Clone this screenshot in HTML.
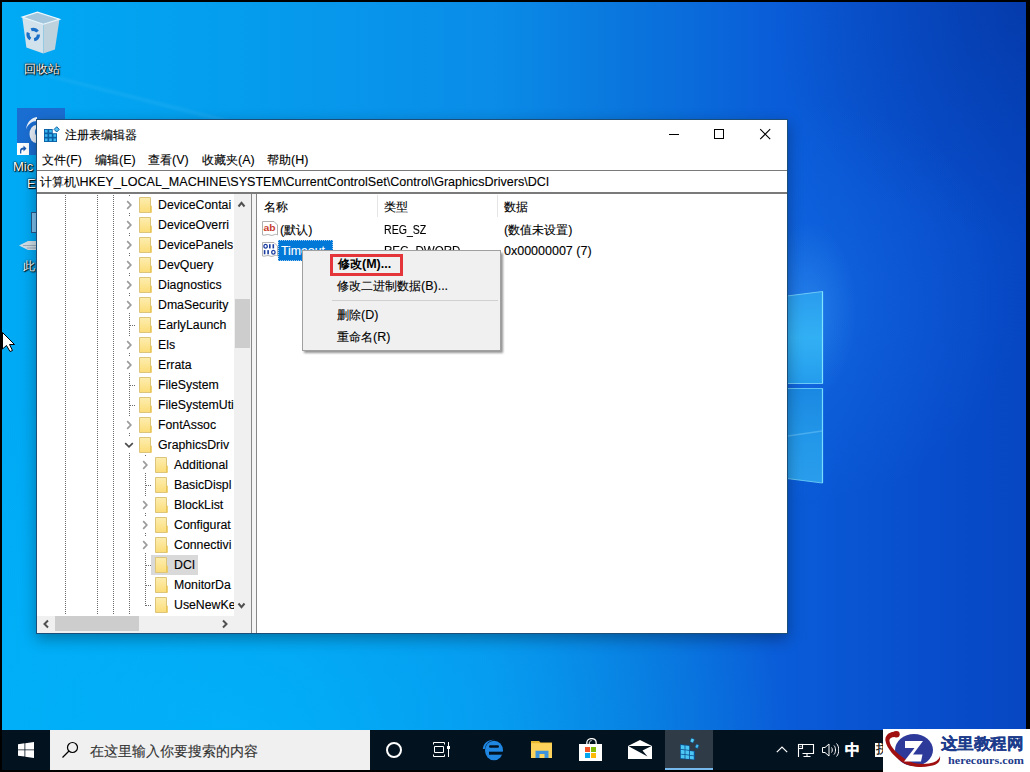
<!DOCTYPE html>
<html><head><meta charset="utf-8">
<style>
html,body{margin:0;padding:0;width:1030px;height:772px;overflow:hidden;background:#000;font-family:"Liberation Sans",sans-serif;}
.a{position:absolute;}
.t{position:absolute;white-space:nowrap;line-height:20px;height:20px;font-size:12.5px;color:#000;-webkit-text-stroke:0.12px currentColor;}
.tr{font-size:12.3px;}
.cj{font-size:12px;}
.dotv{width:1px;background:repeating-linear-gradient(180deg,#6a6a6a 0,#6a6a6a 1px,transparent 1px,transparent 2px);}
.doth{height:1px;background:repeating-linear-gradient(90deg,#6a6a6a 0,#6a6a6a 1px,transparent 1px,transparent 2px);}
#desk{position:absolute;left:2px;top:2px;width:1024px;height:728px;overflow:hidden;
 background:
  radial-gradient(ellipse 50px 90px at 805px 310px, rgba(80,190,255,0.3), rgba(80,190,255,0) 100%),
  radial-gradient(ellipse 220px 200px at 800px 300px, rgba(30,120,240,0.35), rgba(30,120,240,0) 100%),
  radial-gradient(ellipse 260px 240px at 1024px 0px, rgba(0,20,90,0.22), rgba(0,20,90,0) 100%),
  radial-gradient(ellipse 560px 380px at 230px 740px, rgba(0,182,252,0.75), rgba(0,182,252,0) 100%),
  linear-gradient(90deg,#00aaf4 0%,#069aec 28%,#0a8ce8 48%,#0a74dc 62%,#0a5cd8 76%,#084ecc 90%,#0646c2 100%);}
.dl{position:absolute;white-space:nowrap;font-size:12px;color:#fff;text-shadow:0 0 2px #000,1px 1px 1px #000;line-height:14px;}
</style></head><body>
<div id="desk">
  <svg class="a" style="left:0;top:0" width="1024" height="728">
    <path d="M24 68L300 138" stroke="rgba(160,225,255,0.11)" stroke-width="3" filter="blur(1.5px)"/>
    <defs>
      <linearGradient id="pane1" x1="0" y1="0" x2="0" y2="1"><stop offset="0" stop-color="#2a9cee"/><stop offset="0.5" stop-color="#32b0f4"/><stop offset="1" stop-color="#249cec"/></linearGradient>
      <linearGradient id="pane2" x1="0" y1="0" x2="0" y2="1"><stop offset="0" stop-color="#1a88e2"/><stop offset="0.5" stop-color="#2296e8"/><stop offset="1" stop-color="#2a9eec"/></linearGradient>
    </defs>
    <path d="M785 294L820.5 289.5V381.5H785Z" fill="url(#pane1)" stroke="#6ccaf8" stroke-width="1"/><path d="M820.5 289.5V381.5" stroke="#80e4ff" stroke-width="1.2"/>
    <path d="M785 386.5H820.5V481L785 476.5Z" fill="url(#pane2)" stroke="#60c4f4" stroke-width="1"/><path d="M820.5 386.5V481" stroke="#78dcff" stroke-width="1.2"/><path d="M786 434L820 429" stroke="rgba(150,220,255,0.35)" stroke-width="1.5"/>
  </svg>
</div>

<!-- desktop icons -->
<svg class="a" style="left:18px;top:8px" width="46" height="50" viewBox="0 0 46 50">
  <path d="M4.2 9.1L25.3 16.2V45.4L8.4 39.5Z" fill="#d2e2ec"/>
  <path d="M25.3 16.2L41.5 11.3L36.9 41.5L25.3 45.4Z" fill="#bed2de"/>
  <path d="M4.2 9.1L19.4 4.2L41.5 11.3L25.3 16.2Z" fill="#a4c6dc" stroke="#eef8fd" stroke-width="1.2"/>
  <circle cx="15.2" cy="26.6" r="5.2" fill="none" stroke="#1a6fc8" stroke-width="3.2" stroke-dasharray="7 3.9"/>
</svg>
<div class="dl" style="left:24px;top:62px;font-size:12px;text-shadow:0 0 2px #000,1px 1px 1px #000,0 0 1px #000">回收站</div>
<div class="a" style="left:17px;top:108px;width:48px;height:47px;background:#1a6ed2"></div>
<svg class="a" style="left:18px;top:112px" width="20" height="34" viewBox="0 0 20 34"><path d="M8 17.5C9 10 13 6 19 5V9C14 9 10 12 8 17.5Z" fill="#fff" opacity="0.92"/><ellipse cx="18" cy="22" rx="6.5" ry="9" fill="#fff" opacity="0.92"/><ellipse cx="20" cy="20" rx="3" ry="4" fill="#1a6ed2"/></svg>
<div class="a" style="left:17px;top:143px;width:12px;height:12px;background:#fff"></div>
<svg class="a" style="left:17px;top:143px" width="12" height="12" viewBox="0 0 12 12"><path d="M3 10.5V7.5C3 5.5 4.5 4.5 6.5 4.5V2.5L9.5 5.5L6.5 8.5V6.5C5 6.5 4.3 7.3 4.3 8.5V10.5Z" fill="#1c5ab0"/></svg>
<div class="dl" style="left:13px;top:160px;font-size:13px;text-shadow:0 0 2px #000,1px 1px 1px #000,0 0 1px #000">Mic</div>
<div class="dl" style="left:27px;top:177px;font-size:13px;text-shadow:0 0 2px #000,1px 1px 1px #000,0 0 1px #000">Ed</div>
<div class="a" style="left:31px;top:212px;width:6px;height:19px;background:#7cc0ec;border:1px solid #2a5a8a"></div>
<svg class="a" style="left:19px;top:241px" width="18" height="9"><path d="M0 4.5L9 0H18V9H9Z" fill="#d0dde6"/><path d="M4 4.5H18M8 7H18" stroke="#8aa0b0" stroke-width="0.8"/></svg>
<div class="dl" style="left:23px;top:259px">此电</div>
<!-- cursor -->
<svg class="a" style="left:2px;top:332px" width="14" height="21" viewBox="0 0 14 21"><path d="M0.5 0.5V17L4.5 13.5L8 19.5L10.5 18.5L7.5 12.5H12.5Z" fill="#fff" stroke="#000" stroke-width="1"/></svg>

<!-- window -->
<div class="a" style="left:36px;top:119px;width:752px;height:515px;box-shadow:0 5px 14px rgba(0,0,0,0.32)"></div>
<div class="a" style="left:36px;top:119px;width:752px;height:515px;background:#1b4e78"></div>
<div class="a" style="left:37px;top:120px;width:750px;height:513px;background:#fff"></div>
<!-- title -->
<svg class="a" style="left:44px;top:126px" width="16" height="17" viewBox="0 0 16 17">
  <path d="M0 3H8.7V7.3H13V16H0Z" fill="#0b5fa5"/>
  <g fill="#3ab8f0">
    <rect x="0.9" y="3.9" width="2.6" height="2.6"/><rect x="5.2" y="3.9" width="2.6" height="2.6"/>
    <rect x="0.9" y="8.2" width="2.6" height="2.6"/><rect x="5.2" y="8.2" width="2.6" height="2.6"/><rect x="9.5" y="8.2" width="2.6" height="2.6"/>
    <rect x="0.9" y="12.5" width="2.6" height="2.6"/><rect x="5.2" y="12.5" width="2.6" height="2.6"/><rect x="9.5" y="12.5" width="2.6" height="2.6"/>
  </g>
  <path d="M12.7 0.8L15.3 3.4L12.7 6L10.1 3.4Z" fill="#58c4f2" stroke="#0b5fa5" stroke-width="1"/>
</svg>
<div class="t cj" style="left:65px;top:125px">注册表编辑器</div>
<svg class="a" style="left:660px;top:120px" width="127" height="30">
  <path d="M9 14.5H19" stroke="#000" stroke-width="1"/>
  <rect x="54.5" y="9.5" width="9" height="9" fill="none" stroke="#000" stroke-width="1"/>
  <path d="M100.2 9.2L110.2 19.2M110.2 9.2L100.2 19.2" stroke="#000" stroke-width="1.1"/>
</svg>
<!-- menu -->
<div class="t" style="left:42px;top:150px"><span class="cj">文件</span>(F)</div>
<div class="t" style="left:95px;top:150px"><span class="cj">编辑</span>(E)</div>
<div class="t" style="left:148px;top:150px"><span class="cj">查看</span>(V)</div>
<div class="t" style="left:202px;top:150px"><span class="cj">收藏夹</span>(A)</div>
<div class="t" style="left:267px;top:150px"><span class="cj">帮助</span>(H)</div>
<!-- address -->
<div class="a" style="left:37px;top:170px;width:750px;height:1px;background:#7a7a7a"></div>
<div class="a" style="left:37px;top:192px;width:750px;height:2px;background:#7a7a7a"></div>
<div class="t" style="left:40px;top:172px;font-size:12.57px"><span class="cj">计算机</span>\HKEY_LOCAL_MACHINE\SYSTEM\CurrentControlSet\Control\GraphicsDrivers\DCI</div>

<svg width="0" height="0" style="position:absolute"><defs><linearGradient id="fg" x1="0" y1="0" x2="0" y2="1"><stop offset="0" stop-color="#fdeeb0"/><stop offset="1" stop-color="#fbdc78"/></linearGradient></defs></svg>
<div class="a dotv" style="left:65px;top:195px;height:420px"></div>
<div class="a dotv" style="left:97px;top:195px;height:420px"></div>
<div class="a dotv" style="left:113px;top:195px;height:420px"></div>
<div class="a dotv" style="left:129px;top:195px;height:420px"></div>
<div class="a dotv" style="left:145px;top:455px;height:151px"></div>
<div class="a" style="left:124px;top:197px;width:10px;height:16px;background:#fff"></div>
<svg class="a" style="left:125px;top:199px" width="8" height="12" viewBox="0 0 8 12"><path d="M2.2 2.2L5.8 6L2.2 9.8" fill="none" stroke="#9a9a9a" stroke-width="1.7"/></svg>
<svg class="a" style="left:139px;top:197px" width="14" height="17" viewBox="0 0 14 17"><defs></defs><path d="M0.5 0.5H11.5V15.5H0.5Z" fill="url(#fg)" stroke="#dcc47a"/><path d="M11 9.5L12.8 8.5V15.8H11Z" fill="#e9c65a"/></svg>
<div class="t tr" style="left:158px;top:195px">DeviceContai</div>
<div class="a" style="left:124px;top:217px;width:10px;height:16px;background:#fff"></div>
<svg class="a" style="left:125px;top:219px" width="8" height="12" viewBox="0 0 8 12"><path d="M2.2 2.2L5.8 6L2.2 9.8" fill="none" stroke="#9a9a9a" stroke-width="1.7"/></svg>
<svg class="a" style="left:139px;top:217px" width="14" height="17" viewBox="0 0 14 17"><defs></defs><path d="M0.5 0.5H11.5V15.5H0.5Z" fill="url(#fg)" stroke="#dcc47a"/><path d="M11 9.5L12.8 8.5V15.8H11Z" fill="#e9c65a"/></svg>
<div class="t tr" style="left:158px;top:215px">DeviceOverri</div>
<div class="a" style="left:124px;top:237px;width:10px;height:16px;background:#fff"></div>
<svg class="a" style="left:125px;top:239px" width="8" height="12" viewBox="0 0 8 12"><path d="M2.2 2.2L5.8 6L2.2 9.8" fill="none" stroke="#9a9a9a" stroke-width="1.7"/></svg>
<svg class="a" style="left:139px;top:237px" width="14" height="17" viewBox="0 0 14 17"><defs></defs><path d="M0.5 0.5H11.5V15.5H0.5Z" fill="url(#fg)" stroke="#dcc47a"/><path d="M11 9.5L12.8 8.5V15.8H11Z" fill="#e9c65a"/></svg>
<div class="t tr" style="left:158px;top:235px">DevicePanels</div>
<div class="a" style="left:124px;top:257px;width:10px;height:16px;background:#fff"></div>
<svg class="a" style="left:125px;top:259px" width="8" height="12" viewBox="0 0 8 12"><path d="M2.2 2.2L5.8 6L2.2 9.8" fill="none" stroke="#9a9a9a" stroke-width="1.7"/></svg>
<svg class="a" style="left:139px;top:257px" width="14" height="17" viewBox="0 0 14 17"><defs></defs><path d="M0.5 0.5H11.5V15.5H0.5Z" fill="url(#fg)" stroke="#dcc47a"/><path d="M11 9.5L12.8 8.5V15.8H11Z" fill="#e9c65a"/></svg>
<div class="t tr" style="left:158px;top:255px">DevQuery</div>
<div class="a" style="left:124px;top:277px;width:10px;height:16px;background:#fff"></div>
<svg class="a" style="left:125px;top:279px" width="8" height="12" viewBox="0 0 8 12"><path d="M2.2 2.2L5.8 6L2.2 9.8" fill="none" stroke="#9a9a9a" stroke-width="1.7"/></svg>
<svg class="a" style="left:139px;top:277px" width="14" height="17" viewBox="0 0 14 17"><defs></defs><path d="M0.5 0.5H11.5V15.5H0.5Z" fill="url(#fg)" stroke="#dcc47a"/><path d="M11 9.5L12.8 8.5V15.8H11Z" fill="#e9c65a"/></svg>
<div class="t tr" style="left:158px;top:275px">Diagnostics</div>
<div class="a" style="left:124px;top:297px;width:10px;height:16px;background:#fff"></div>
<svg class="a" style="left:125px;top:299px" width="8" height="12" viewBox="0 0 8 12"><path d="M2.2 2.2L5.8 6L2.2 9.8" fill="none" stroke="#9a9a9a" stroke-width="1.7"/></svg>
<svg class="a" style="left:139px;top:297px" width="14" height="17" viewBox="0 0 14 17"><defs></defs><path d="M0.5 0.5H11.5V15.5H0.5Z" fill="url(#fg)" stroke="#dcc47a"/><path d="M11 9.5L12.8 8.5V15.8H11Z" fill="#e9c65a"/></svg>
<div class="t tr" style="left:158px;top:295px">DmaSecurity</div>
<div class="a doth" style="left:130px;top:325px;width:6px"></div>
<svg class="a" style="left:139px;top:317px" width="14" height="17" viewBox="0 0 14 17"><defs></defs><path d="M0.5 0.5H11.5V15.5H0.5Z" fill="url(#fg)" stroke="#dcc47a"/><path d="M11 9.5L12.8 8.5V15.8H11Z" fill="#e9c65a"/></svg>
<div class="t tr" style="left:158px;top:315px">EarlyLaunch</div>
<div class="a" style="left:124px;top:337px;width:10px;height:16px;background:#fff"></div>
<svg class="a" style="left:125px;top:339px" width="8" height="12" viewBox="0 0 8 12"><path d="M2.2 2.2L5.8 6L2.2 9.8" fill="none" stroke="#9a9a9a" stroke-width="1.7"/></svg>
<svg class="a" style="left:139px;top:337px" width="14" height="17" viewBox="0 0 14 17"><defs></defs><path d="M0.5 0.5H11.5V15.5H0.5Z" fill="url(#fg)" stroke="#dcc47a"/><path d="M11 9.5L12.8 8.5V15.8H11Z" fill="#e9c65a"/></svg>
<div class="t tr" style="left:158px;top:335px">Els</div>
<div class="a" style="left:124px;top:357px;width:10px;height:16px;background:#fff"></div>
<svg class="a" style="left:125px;top:359px" width="8" height="12" viewBox="0 0 8 12"><path d="M2.2 2.2L5.8 6L2.2 9.8" fill="none" stroke="#9a9a9a" stroke-width="1.7"/></svg>
<svg class="a" style="left:139px;top:357px" width="14" height="17" viewBox="0 0 14 17"><defs></defs><path d="M0.5 0.5H11.5V15.5H0.5Z" fill="url(#fg)" stroke="#dcc47a"/><path d="M11 9.5L12.8 8.5V15.8H11Z" fill="#e9c65a"/></svg>
<div class="t tr" style="left:158px;top:355px">Errata</div>
<div class="a doth" style="left:130px;top:385px;width:6px"></div>
<svg class="a" style="left:139px;top:377px" width="14" height="17" viewBox="0 0 14 17"><defs></defs><path d="M0.5 0.5H11.5V15.5H0.5Z" fill="url(#fg)" stroke="#dcc47a"/><path d="M11 9.5L12.8 8.5V15.8H11Z" fill="#e9c65a"/></svg>
<div class="t tr" style="left:158px;top:375px">FileSystem</div>
<div class="a doth" style="left:130px;top:405px;width:6px"></div>
<svg class="a" style="left:139px;top:397px" width="14" height="17" viewBox="0 0 14 17"><defs></defs><path d="M0.5 0.5H11.5V15.5H0.5Z" fill="url(#fg)" stroke="#dcc47a"/><path d="M11 9.5L12.8 8.5V15.8H11Z" fill="#e9c65a"/></svg>
<div class="t tr" style="left:158px;top:395px">FileSystemUti</div>
<div class="a" style="left:124px;top:417px;width:10px;height:16px;background:#fff"></div>
<svg class="a" style="left:125px;top:419px" width="8" height="12" viewBox="0 0 8 12"><path d="M2.2 2.2L5.8 6L2.2 9.8" fill="none" stroke="#9a9a9a" stroke-width="1.7"/></svg>
<svg class="a" style="left:139px;top:417px" width="14" height="17" viewBox="0 0 14 17"><defs></defs><path d="M0.5 0.5H11.5V15.5H0.5Z" fill="url(#fg)" stroke="#dcc47a"/><path d="M11 9.5L12.8 8.5V15.8H11Z" fill="#e9c65a"/></svg>
<div class="t tr" style="left:158px;top:415px">FontAssoc</div>
<div class="a" style="left:123px;top:437px;width:12px;height:16px;background:#fff"></div>
<svg class="a" style="left:123px;top:441px" width="12" height="8" viewBox="0 0 12 8"><path d="M2.2 2.2L6 5.8L9.8 2.2" fill="none" stroke="#4a4a4a" stroke-width="1.7"/></svg>
<svg class="a" style="left:139px;top:437px" width="14" height="17" viewBox="0 0 14 17"><defs></defs><path d="M0.5 0.5H11.5V15.5H0.5Z" fill="url(#fg)" stroke="#dcc47a"/><path d="M11 9.5L12.8 8.5V15.8H11Z" fill="#e9c65a"/></svg>
<div class="t tr" style="left:158px;top:435px">GraphicsDriv</div>
<div class="a" style="left:140px;top:457px;width:10px;height:16px;background:#fff"></div>
<svg class="a" style="left:141px;top:459px" width="8" height="12" viewBox="0 0 8 12"><path d="M2.2 2.2L5.8 6L2.2 9.8" fill="none" stroke="#9a9a9a" stroke-width="1.7"/></svg>
<svg class="a" style="left:155px;top:457px" width="14" height="17" viewBox="0 0 14 17"><defs></defs><path d="M0.5 0.5H11.5V15.5H0.5Z" fill="url(#fg)" stroke="#dcc47a"/><path d="M11 9.5L12.8 8.5V15.8H11Z" fill="#e9c65a"/></svg>
<div class="t tr" style="left:174px;top:455px">Additional</div>
<div class="a doth" style="left:146px;top:485px;width:6px"></div>
<svg class="a" style="left:155px;top:477px" width="14" height="17" viewBox="0 0 14 17"><defs></defs><path d="M0.5 0.5H11.5V15.5H0.5Z" fill="url(#fg)" stroke="#dcc47a"/><path d="M11 9.5L12.8 8.5V15.8H11Z" fill="#e9c65a"/></svg>
<div class="t tr" style="left:174px;top:475px">BasicDispl</div>
<div class="a" style="left:140px;top:497px;width:10px;height:16px;background:#fff"></div>
<svg class="a" style="left:141px;top:499px" width="8" height="12" viewBox="0 0 8 12"><path d="M2.2 2.2L5.8 6L2.2 9.8" fill="none" stroke="#9a9a9a" stroke-width="1.7"/></svg>
<svg class="a" style="left:155px;top:497px" width="14" height="17" viewBox="0 0 14 17"><defs></defs><path d="M0.5 0.5H11.5V15.5H0.5Z" fill="url(#fg)" stroke="#dcc47a"/><path d="M11 9.5L12.8 8.5V15.8H11Z" fill="#e9c65a"/></svg>
<div class="t tr" style="left:174px;top:495px">BlockList</div>
<div class="a" style="left:140px;top:517px;width:10px;height:16px;background:#fff"></div>
<svg class="a" style="left:141px;top:519px" width="8" height="12" viewBox="0 0 8 12"><path d="M2.2 2.2L5.8 6L2.2 9.8" fill="none" stroke="#9a9a9a" stroke-width="1.7"/></svg>
<svg class="a" style="left:155px;top:517px" width="14" height="17" viewBox="0 0 14 17"><defs></defs><path d="M0.5 0.5H11.5V15.5H0.5Z" fill="url(#fg)" stroke="#dcc47a"/><path d="M11 9.5L12.8 8.5V15.8H11Z" fill="#e9c65a"/></svg>
<div class="t tr" style="left:174px;top:515px">Configurat</div>
<div class="a" style="left:140px;top:537px;width:10px;height:16px;background:#fff"></div>
<svg class="a" style="left:141px;top:539px" width="8" height="12" viewBox="0 0 8 12"><path d="M2.2 2.2L5.8 6L2.2 9.8" fill="none" stroke="#9a9a9a" stroke-width="1.7"/></svg>
<svg class="a" style="left:155px;top:537px" width="14" height="17" viewBox="0 0 14 17"><defs></defs><path d="M0.5 0.5H11.5V15.5H0.5Z" fill="url(#fg)" stroke="#dcc47a"/><path d="M11 9.5L12.8 8.5V15.8H11Z" fill="#e9c65a"/></svg>
<div class="t tr" style="left:174px;top:535px">Connectivi</div>
<div class="a doth" style="left:146px;top:565px;width:6px"></div>
<div class="a" style="left:151px;top:555px;width:47px;height:20px;background:#d9d9d9"></div>
<svg class="a" style="left:155px;top:557px" width="14" height="17" viewBox="0 0 14 17"><defs></defs><path d="M0.5 0.5H11.5V15.5H0.5Z" fill="url(#fg)" stroke="#dcc47a"/><path d="M11 9.5L12.8 8.5V15.8H11Z" fill="#e9c65a"/></svg>
<div class="t tr" style="left:174px;top:555px">DCI</div>
<div class="a doth" style="left:146px;top:585px;width:6px"></div>
<svg class="a" style="left:155px;top:577px" width="14" height="17" viewBox="0 0 14 17"><defs></defs><path d="M0.5 0.5H11.5V15.5H0.5Z" fill="url(#fg)" stroke="#dcc47a"/><path d="M11 9.5L12.8 8.5V15.8H11Z" fill="#e9c65a"/></svg>
<div class="t tr" style="left:174px;top:575px">MonitorDa</div>
<div class="a doth" style="left:146px;top:605px;width:6px"></div>
<svg class="a" style="left:155px;top:597px" width="14" height="17" viewBox="0 0 14 17"><defs></defs><path d="M0.5 0.5H11.5V15.5H0.5Z" fill="url(#fg)" stroke="#dcc47a"/><path d="M11 9.5L12.8 8.5V15.8H11Z" fill="#e9c65a"/></svg>
<div class="t tr" style="left:174px;top:595px">UseNewKe</div>
<!-- tree scrollbars -->
<div class="a" style="left:234px;top:194px;width:17px;height:422px;background:#f0f0f0"></div>
<div class="a" style="left:235px;top:299px;width:15px;height:49px;background:#cdcdcd"></div>
<svg class="a" style="left:234px;top:196px" width="17" height="16"><path d="M4.5 10.5L7.5 6.8L10.5 10.5" fill="none" stroke="#505050" stroke-width="2"/></svg>
<svg class="a" style="left:234px;top:598px" width="17" height="16"><path d="M4.5 5.5L7.5 9.2L10.5 5.5" fill="none" stroke="#505050" stroke-width="2"/></svg>
<div class="a" style="left:37px;top:616px;width:214px;height:17px;background:#f0f0f0"></div>
<div class="a" style="left:55px;top:616px;width:84px;height:15px;background:#cdcdcd"></div>
<svg class="a" style="left:38px;top:616px" width="17" height="16"><path d="M10 4.5L6.5 8L10 11.5" fill="none" stroke="#505050" stroke-width="2"/></svg>
<svg class="a" style="left:216px;top:616px" width="17" height="16"><path d="M7 4.5L10.5 8L7 11.5" fill="none" stroke="#505050" stroke-width="2"/></svg>
<div class="a" style="left:251px;top:194px;width:1px;height:439px;background:#888"></div>
<div class="a" style="left:252px;top:194px;width:4px;height:439px;background:#f4f4f4"></div>
<div class="a" style="left:256px;top:194px;width:1px;height:439px;background:#888"></div>

<!-- list -->
<div class="t cj" style="left:264px;top:197px">名称</div>
<div class="t cj" style="left:384px;top:197px">类型</div>
<div class="t cj" style="left:504px;top:197px">数据</div>
<div class="a" style="left:377px;top:195px;width:1px;height:22px;background:#e5e5e5"></div>
<div class="a" style="left:497px;top:195px;width:1px;height:22px;background:#e5e5e5"></div>

<svg class="a" style="left:262px;top:221px" width="17" height="16" viewBox="0 0 17 16">
  <path d="M0.5 0.5H12L15.5 4V14C13 12 11 15.5 8 14C5 12.5 3 15 0.5 14Z" fill="#fff" stroke="#b0b0b0"/>
  <text x="1.5" y="9.8" font-family="Liberation Sans" font-weight="bold" font-size="9" fill="#c83a2c" textLength="12" lengthAdjust="spacingAndGlyphs">ab</text>
</svg>
<div class="t" style="left:280px;top:220px">(<span class="cj">默认</span>)</div>
<div class="t tr" style="left:384px;top:220px;transform:scaleX(0.86);transform-origin:0 0">REG_SZ</div>
<div class="t" style="left:504px;top:220px">(<span class="cj">数值未设置</span>)</div>

<svg class="a" style="left:262px;top:242px" width="17" height="16" viewBox="0 0 17 16">
  <path d="M0.5 0.5H12L15.5 4V14C13 12 11 15.5 8 14C5 12.5 3 15 0.5 14Z" fill="#fff" stroke="#b0b0b0"/>
  <g fill="none" stroke="#1a3ca0" stroke-width="1.3"><ellipse cx="3.6" cy="4.3" rx="1.7" ry="1.9"/><ellipse cx="11.4" cy="10.2" rx="1.7" ry="1.9"/></g>
  <g fill="#1a3ca0"><rect x="7" y="2.2" width="1.6" height="4.2"/><rect x="10.5" y="2.2" width="1.6" height="4.2"/><rect x="1.8" y="8.1" width="1.6" height="4.2"/><rect x="5.3" y="8.1" width="1.6" height="4.2"/></g>
</svg>
<div class="a" style="left:278px;top:240px;width:55px;height:21px;background:#0078d7"></div>
<div class="a" style="left:278px;top:240px;width:53px;height:19px;border:1px dotted #9cc8f0"></div>
<div class="t tr" style="left:281px;top:241px;color:#fff">Timeout</div>
<div class="t tr" style="left:384px;top:241px;transform:scaleX(0.94);transform-origin:0 0">REG_DWORD</div>
<div class="t" style="left:504px;top:241px">0x00000007 (7)</div>

<!-- context menu -->
<div class="a" style="left:304px;top:253px;width:199px;height:100px;background:rgba(0,0,0,0.42);filter:blur(1px)"></div>
<div class="a" style="left:302px;top:250px;width:197px;height:99px;background:#f0f0f0;border:1px solid #a0a0a0"></div>
<div class="t" style="left:338px;top:254px;font-weight:bold;-webkit-text-stroke:0"><span class="cj">修改</span>(M)...</div>
<div class="a" style="left:330px;top:254px;width:67px;height:16px;border:3px solid #e4363a"></div>
<div class="t" style="left:337px;top:276px"><span class="cj">修改二进制数据</span>(B)...</div>
<div class="a" style="left:332px;top:300px;width:166px;height:1px;background:#d0d0d0"></div>
<div class="t" style="left:337px;top:305px"><span class="cj">删除</span>(D)</div>
<div class="t" style="left:337px;top:327px"><span class="cj">重命名</span>(R)</div>

<!-- taskbar -->
<div class="a" style="left:2px;top:730px;width:1024px;height:40px;background:#03121f"></div>
<svg class="a" style="left:18px;top:742px" width="16" height="16" viewBox="0 0 16 16"><path d="M0 2.2L6.5 1.3V7.5H0ZM7.3 1.2L16 0V7.5H7.3ZM0 8.3H6.5V14.6L0 13.7ZM7.3 8.3H16V16L7.3 14.8Z" fill="#fff"/></svg>
<div class="a" style="left:50px;top:730px;width:320px;height:40px;background:#f0f0f0"></div>
<svg class="a" style="left:60px;top:740px" width="20" height="20"><circle cx="12.5" cy="7.5" r="5" fill="none" stroke="#000" stroke-width="1.2"/><path d="M9 11L2.5 17.5" stroke="#000" stroke-width="1.2"/></svg>
<div class="t cj" style="left:90px;top:742px;color:#333;font-size:13.5px">在这里输入你要搜索的内容</div>
<svg class="a" style="left:384px;top:740px" width="20" height="20"><circle cx="10" cy="10" r="7" fill="none" stroke="#fff" stroke-width="2"/></svg>
<svg class="a" style="left:433px;top:742px" width="17" height="16" viewBox="0 0 17 16"><path d="M0.5 2.5V0.5H11.5V2.5M0.5 12.5V14.5H11.5V12.5M1.5 4.5H10.5V10.5H1.5Z" fill="none" stroke="#fff" stroke-width="1"/><path d="M15.5 0V15" stroke="#fff" stroke-width="1"/><rect x="14" y="4" width="3" height="3" fill="#fff"/></svg>
<!-- edge -->
<svg class="a" style="left:482px;top:739px" width="22" height="22" viewBox="0 0 22 22">
  <ellipse cx="12" cy="11.5" rx="9" ry="9.8" fill="#1f86e2"/>
  <rect x="7" y="6.3" width="10" height="2.4" rx="1.2" fill="#03121f"/>
  <rect x="7" y="12.7" width="15" height="3" fill="#03121f"/>
  <path d="M0.8 10C1.5 4 6 0.5 12 0.8C7 2 3.5 5 2.8 10Z" fill="#1f86e2"/>
</svg>
<!-- explorer -->
<svg class="a" style="left:531px;top:741px" width="22" height="18" viewBox="0 0 22 18">
  <path d="M0 0H8L9.5 1.5H21V17H0Z" fill="#e8b830"/>
  <path d="M0 2.2H21V17H0Z" fill="#fdd35c"/>
  <path d="M4.5 17V9.7H17.5V17H13.5V13H8.5V17Z" fill="#3d94dc"/>
</svg>
<!-- store -->
<svg class="a" style="left:579px;top:738px" width="23" height="24" viewBox="0 0 23 24"><path d="M7.8 7V5C7.8 2.2 10 0.6 12.5 0.6C15 0.6 17.2 2.2 17.2 5V7" fill="none" stroke="#fff" stroke-width="1.3"/><path d="M10.2 6C10.2 3.8 11 2.8 12.6 2.6" fill="none" stroke="#fff" stroke-width="1"/><rect x="0" y="6" width="23" height="17" fill="#fff"/><rect x="6" y="9" width="5" height="5" fill="#f35325"/><rect x="12" y="9" width="5" height="5" fill="#81bc06"/><rect x="6" y="15" width="5" height="5" fill="#05a6f0"/><rect x="12" y="15" width="5" height="5" fill="#ffba08"/></svg>
<!-- mail -->
<svg class="a" style="left:628px;top:740px" width="24" height="19" viewBox="0 0 24 19"><path d="M0 6L12 0L24 6V19H0Z" fill="#fff"/><path d="M0.5 6H23.5L14.5 10.5L19.5 16.5L2 7Z" fill="#03121f"/></svg>
<!-- regedit active -->
<div class="a" style="left:665px;top:730px;width:48px;height:40px;background:#2f3b46"></div>
<div class="a" style="left:665px;top:768px;width:48px;height:2px;background:#76b9ed"></div>
<svg class="a" style="left:679px;top:737px" width="22" height="23" viewBox="0 0 22 23">
  <path d="M1 7L10.8 8.3V13.3L16 14V23L1 22Z" fill="#0b4f8e"/>
  <g fill="#4cc6f4">
    <path d="M1.8 7.9L5.6 8.4V12.4L1.8 11.9Z"/><path d="M6.4 8.5L10.2 9V13L6.4 12.5Z"/>
    <path d="M1.8 12.7L5.6 13.2V17.2L1.8 16.7Z"/><path d="M6.4 13.3L10.2 13.8V17.8L6.4 17.3Z"/><path d="M11 13.9L14.8 14.4V18.4L11 17.9Z"/>
    <path d="M1.8 17.5L5.6 18V21.6L1.8 21.3Z"/><path d="M6.4 18.1L10.2 18.6V22L6.4 21.7Z"/><path d="M11 18.7L14.8 19.2V22.4L11 22.1Z"/>
  </g>
  <path d="M12.5 1L15.5 2.5L14 6L11 4.5Z" fill="#5ad2f6" stroke="#0b4f8e" stroke-width="0.6"/>
  <path d="M17.5 7L20 8.2L18.5 11.5L16 10.3Z" fill="#48c0ee" stroke="#0b4f8e" stroke-width="0.6"/>
</svg>
<!-- tray -->
<svg class="a" style="left:776px;top:745px" width="12" height="8"><path d="M0.8 7.2L6 2L11.2 7.2" fill="none" stroke="#fff" stroke-width="1.2"/></svg>
<svg class="a" style="left:797px;top:743px" width="18" height="15" viewBox="0 0 18 15"><path d="M5.5 1.5H16.5V10.5H5.5M1.5 5.5V14" fill="none" stroke="#fff" stroke-width="1.1"/><path d="M10 10.5V13.5M6.5 13.5H13.5" stroke="#fff" stroke-width="1.1"/><rect x="1.5" y="1.5" width="4" height="4" fill="#03121f" stroke="#fff" stroke-width="1.1"/><path d="M2.6 3L3.5 4L4.4 3" fill="none" stroke="#fff" stroke-width="0.7"/></svg>
<svg class="a" style="left:822px;top:743px" width="17" height="14" viewBox="0 0 17 14"><path d="M0.5 4.5H3L7 1V13L3 9.5H0.5Z" fill="none" stroke="#fff"/><path d="M9.5 4.5C10.5 5.5 10.5 8.5 9.5 9.5M12 2.5C14 4.5 14 9.5 12 11.5M14.5 0.5C17.5 3.5 17.5 10.5 14.5 13.5" fill="none" stroke="#fff"/></svg>
<div class="t cj" style="left:845px;top:740px;color:#fff;font-size:15px;font-weight:bold;-webkit-text-stroke:0.25px #fff">中</div>
<div class="a" style="left:875px;top:743px;width:8px;height:14px;background:#fff"></div>
<div class="a" style="left:875px;top:743px;width:8px;height:14px;overflow:hidden"><div class="t cj" style="left:1px;top:-4px;color:#000;font-size:12.5px;-webkit-text-stroke:0.2px #000">拼</div></div>

<!-- watermark -->
<div class="a" style="left:883px;top:729px;width:147px;height:43px;background:#fff"></div>
<svg class="a" style="left:883px;top:729px" width="147" height="43" viewBox="0 0 147 43">
  <ellipse cx="31" cy="21" rx="19" ry="16" fill="#2e3a9a"/>
  <path d="M13 2.5C7 2.5 1.5 6 2.5 12C4 20 12 28 19 33C26 38 38 39 47 37C53 36 58 34 57 27C56 31 52 33.5 46 34.5C37 36 28 34 22 30C15 25 7 18 6.5 12C6 9 9 7.5 13 8Z" fill="#a01010"/>
  <circle cx="13.4" cy="5.2" r="3.3" fill="#a01010"/>
  <path d="M22 12H40L30 25.5H39.5L38 32.5H21L31.5 19H22Z" fill="#fff"/>
  <text x="57.5" y="20.3" font-family="Liberation Serif" font-weight="bold" font-size="16" fill="#1e3c8c" stroke="#1e3c8c" stroke-width="0.25" textLength="83" lengthAdjust="spacingAndGlyphs">这里教程网</text>
  <text x="65" y="34.5" font-family="Liberation Serif" font-weight="bold" font-size="11" fill="#1e3c8c" textLength="76" lengthAdjust="spacingAndGlyphs">herecours.com</text>
</svg>
</body></html>
